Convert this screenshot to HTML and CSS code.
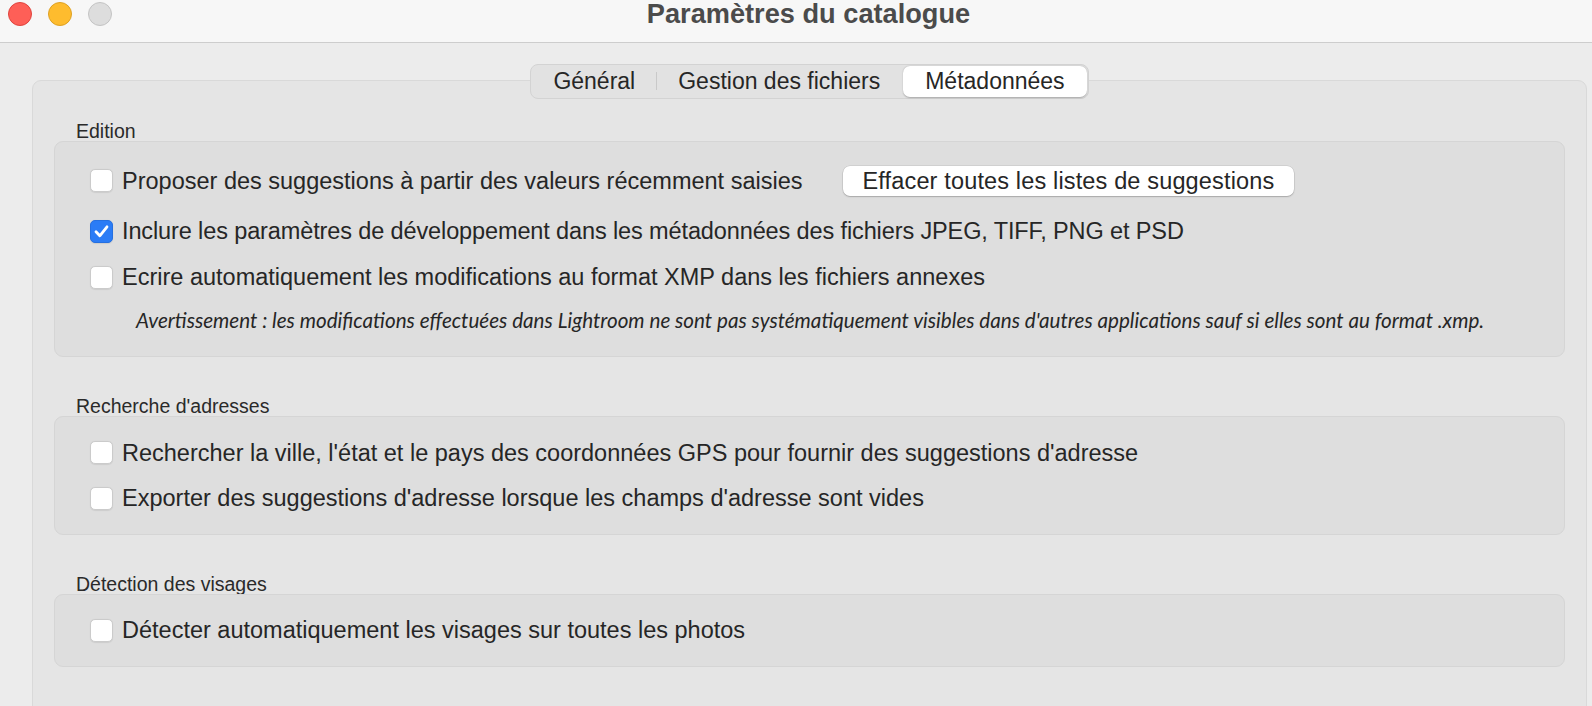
FILE: index.html
```html
<!DOCTYPE html>
<html lang="fr">
<head>
<meta charset="utf-8">
<title>Paramètres du catalogue</title>
<link rel="stylesheet" href="styles.css">
</head>
<body>
<div class="window">
  <header class="titlebar">
    <div class="lights">
      <span class="light red"></span>
      <span class="light yellow"></span>
      <span class="light gray"></span>
    </div>
    <h1 class="title">Paramètres du catalogue</h1>
    <div class="spacer"></div>
  </header>
  <main class="content">
    <section class="panel">
      <div class="tabs-wrap">
        <nav class="tabs">
          <span class="tab">Général</span>
          <span class="tab-sep"></span>
          <span class="tab">Gestion des fichiers</span>
          <span class="tab active">Métadonnées</span>
        </nav>
      </div>

      <div class="group-label first">Edition</div>
      <div class="group group-edition">
        <div class="row">
          <span class="check"></span>
          <span class="label">Proposer des suggestions à partir des valeurs récemment saisies</span>
          <button class="btn">Effacer toutes les listes de suggestions</button>
        </div>
        <div class="row row-2">
          <span class="check checked"><svg viewBox="0 0 23 23" width="23" height="23"><path d="M6 11.8 L9.8 15.8 L17 6.8" fill="none" stroke="#fff" stroke-width="2.8" stroke-linecap="round" stroke-linejoin="round"/></svg></span>
          <span class="label label-narrow">Inclure les paramètres de développement dans les métadonnées des fichiers JPEG, TIFF, PNG et PSD</span>
        </div>
        <div class="row row-3">
          <span class="check"></span>
          <span class="label">Ecrire automatiquement les modifications au format XMP dans les fichiers annexes</span>
        </div>
        <p class="warning">Avertissement : les modifications effectuées dans Lightroom ne sont pas systématiquement visibles dans d'autres applications sauf si elles sont au format .xmp.</p>
      </div>

      <div class="group-label">Recherche d'adresses</div>
      <div class="group">
        <div class="row">
          <span class="check"></span>
          <span class="label">Rechercher la ville, l'état et le pays des coordonnées GPS pour fournir des suggestions d'adresse</span>
        </div>
        <div class="row row-next">
          <span class="check"></span>
          <span class="label">Exporter des suggestions d'adresse lorsque les champs d'adresse sont vides</span>
        </div>
      </div>

      <div class="group-label">Détection des visages</div>
      <div class="group">
        <div class="row">
          <span class="check"></span>
          <span class="label">Détecter automatiquement les visages sur toutes les photos</span>
        </div>
      </div>
    </section>
  </main>
</div>
</body>
</html>
```

FILE: styles.css
```css
* { box-sizing: border-box; }

html, body {
  margin: 0;
  padding: 0;
  width: 1592px;
  height: 706px;
  overflow: hidden;
  background: #ececec;
  font-family: "Liberation Sans", Arial, sans-serif;
  color: #262626;
}

.window {
  width: 1592px;
  height: 706px;
  overflow: hidden;
  display: flex;
  flex-direction: column;
}

.titlebar {
  height: 43px;
  flex: none;
  background: #f7f7f7;
  border-bottom: 1px solid #cdcdcd;
  display: grid;
  grid-template-columns: 1fr auto 1fr;
  align-items: start;
}

.lights {
  display: flex;
  gap: 16px;
  padding-left: 8px;
  padding-top: 1.5px;
}

.light {
  width: 24px;
  height: 24px;
  border-radius: 50%;
  display: block;
}
.light.red { background: #fe5f57; border: 1px solid #e0443e; }
.light.yellow { background: #febc2e; border: 1px solid #dea123; }
.light.gray { background: #dddddd; border: 1px solid #c4c4c4; }

.title {
  margin: 0;
  padding: 1px 0 0 25px;
  font-size: 27.2px;
  line-height: 26px;
  font-weight: bold;
  color: #4b4b4b;
}

.content {
  flex: 1;
  padding: 37px 5px 0 32px;
}

.panel {
  height: 700px;
  background: #e5e5e5;
  border: 1px solid #d9d9d9;
  border-radius: 9px;
  padding: 0 21px;
  display: flex;
  flex-direction: column;
}

.tabs-wrap {
  display: flex;
  justify-content: center;
  margin-top: -17.5px;
}

.tabs {
  display: flex;
  align-items: center;
  height: 35px;
  padding: 1px;
  background: #e2e2e2;
  border: 1px solid #d3d3d3;
  border-radius: 8px;
  font-size: 23px;
  color: #262626;
}

.tab {
  line-height: 31px;
  padding: 0 21px;
  border-radius: 7px;
}

.tab-sep {
  width: 1px;
  height: 18px;
  background: #c9c9c9;
}

.tab.active {
  background: #ffffff;
  margin-left: 2px;
  padding: 0 22px;
  box-shadow: 0 0.5px 1.5px rgba(0, 0, 0, 0.25);
}

.group-label {
  font-size: 19.5px;
  line-height: 20px;
  color: #2a2a2a;
  padding-left: 22px;
  margin-top: 39.25px;
}
.group-label.first { margin-top: 22.25px; }

.group {
  background: #dedede;
  border: 1px solid #d5d5d5;
  border-radius: 9px;
  padding: 20.5px 0 20.5px 35px;
  display: flex;
  flex-direction: column;
}

.group-edition {
  padding-top: 24px;
  padding-bottom: 23.5px;
}

.row {
  height: 30px;
  display: flex;
  align-items: center;
  font-size: 23.5px;
  line-height: 30px;
  white-space: nowrap;
}

.row-2 { margin-top: 20.5px; }
.row-3 { margin-top: 16px; }
.row-next { margin-top: 15.5px; }

.check {
  width: 23px;
  height: 23px;
  flex: none;
  border-radius: 5px;
  background: #ffffff;
  border: 1px solid #cbcbcb;
  box-shadow: 0 0.5px 1px rgba(0, 0, 0, 0.08);
  margin-right: 9px;
  display: flex;
}

.check.checked {
  background: #2b7cf6;
  border-color: #2670e0;
}
.check.checked svg {
  margin: -1px;
}

.label { display: block; }
.label-narrow { letter-spacing: -0.12px; }

.btn {
  margin-left: 40px;
  height: 30px;
  padding: 0 20px;
  background: #ffffff;
  border: none;
  border-radius: 7px;
  box-shadow: 0 0 0 0.5px rgba(0, 0, 0, 0.12), 0 1px 1.5px rgba(0, 0, 0, 0.2);
  font-family: "Liberation Sans", Arial, sans-serif;
  font-size: 23.5px;
  letter-spacing: 0.15px;
  line-height: 30px;
  color: #262626;
}

.warning {
  margin: 16px 0 0 46px;
  font-family: Lato, "Open Sans", sans-serif;
  font-style: italic;
  font-size: 20.65px;
  line-height: 24px;
  color: #262626;
  white-space: nowrap;
}
```
